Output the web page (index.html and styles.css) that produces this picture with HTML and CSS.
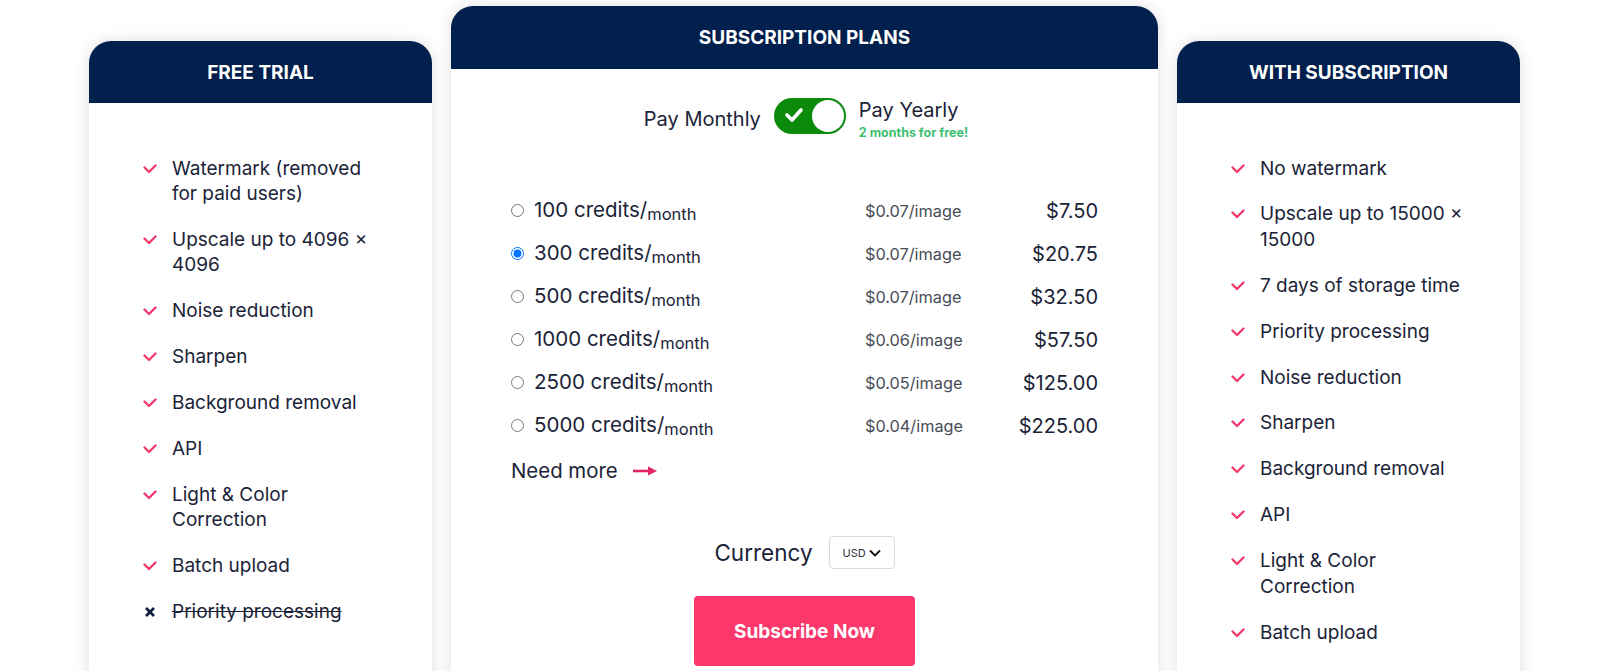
FILE: index.html
```html
<!DOCTYPE html>
<html lang="en">
<head>
<meta charset="utf-8">
<title>Pricing</title>
<link rel="stylesheet" href="styles.css">
</head>
<body>
<div class="pricing">
  <section class="card side">
    <header class="card-head">FREE TRIAL</header>
    <ul class="features">
      <li><svg class="ico" viewBox="0 0 14 10"><polyline points="1.5,3.5 6,8 12.5,1.5"/></svg><span>Watermark (removed for paid users)</span></li>
      <li><svg class="ico" viewBox="0 0 14 10"><polyline points="1.5,3.5 6,8 12.5,1.5"/></svg><span>Upscale up to 4096 × 4096</span></li>
      <li><svg class="ico" viewBox="0 0 14 10"><polyline points="1.5,3.5 6,8 12.5,1.5"/></svg><span>Noise reduction</span></li>
      <li><svg class="ico" viewBox="0 0 14 10"><polyline points="1.5,3.5 6,8 12.5,1.5"/></svg><span>Sharpen</span></li>
      <li><svg class="ico" viewBox="0 0 14 10"><polyline points="1.5,3.5 6,8 12.5,1.5"/></svg><span>Background removal</span></li>
      <li><svg class="ico" viewBox="0 0 14 10"><polyline points="1.5,3.5 6,8 12.5,1.5"/></svg><span>API</span></li>
      <li><svg class="ico" viewBox="0 0 14 10"><polyline points="1.5,3.5 6,8 12.5,1.5"/></svg><span>Light &amp; Color Correction</span></li>
      <li><svg class="ico" viewBox="0 0 14 10"><polyline points="1.5,3.5 6,8 12.5,1.5"/></svg><span>Batch upload</span></li>
      <li class="off"><svg class="ico x" viewBox="0 0 14 10"><path d="M3,1 L11,9 M11,1 L3,9"/></svg><span>Priority processing</span></li>
    </ul>
  </section>

  <section class="card main">
    <header class="card-head">SUBSCRIPTION PLANS</header>
    <div class="main-body">
      <div class="billing">
        <span class="bill-label monthly">Pay Monthly</span>
        <span class="toggle">
          <svg class="toggle-check" viewBox="0 0 20 16"><polyline points="3,8 8,13 17,3"/></svg>
          <span class="knob"></span>
        </span>
        <span class="yearly">
          <span class="bill-label">Pay Yearly</span>
          <span class="free">2 months for free!</span>
        </span>
      </div>

      <div class="plans">
        <label class="plan"><span class="plan-name"><input type="radio" name="plan"><span class="credits">100 credits/<small>month</small></span></span><span class="per">$0.07/image</span><span class="price">$7.50</span></label>
        <label class="plan"><span class="plan-name"><input type="radio" name="plan" checked><span class="credits">300 credits/<small>month</small></span></span><span class="per">$0.07/image</span><span class="price">$20.75</span></label>
        <label class="plan"><span class="plan-name"><input type="radio" name="plan"><span class="credits">500 credits/<small>month</small></span></span><span class="per">$0.07/image</span><span class="price">$32.50</span></label>
        <label class="plan"><span class="plan-name"><input type="radio" name="plan"><span class="credits">1000 credits/<small>month</small></span></span><span class="per">$0.06/image</span><span class="price">$57.50</span></label>
        <label class="plan"><span class="plan-name"><input type="radio" name="plan"><span class="credits">2500 credits/<small>month</small></span></span><span class="per">$0.05/image</span><span class="price">$125.00</span></label>
        <label class="plan"><span class="plan-name"><input type="radio" name="plan"><span class="credits">5000 credits/<small>month</small></span></span><span class="per">$0.04/image</span><span class="price">$225.00</span></label>
      </div>

      <a class="need-more">Need more <svg class="arrow" viewBox="0 0 24 12"><path d="M0,6 H17" /><polygon points="15,1.5 24,6 15,10.5"/></svg></a>

      <div class="currency">
        <span class="currency-label">Currency</span>
        <span class="select">USD<svg viewBox="0 0 12 8"><polyline points="1,1.5 6,6.5 11,1.5"/></svg></span>
      </div>

      <button class="subscribe">Subscribe Now</button>
    </div>
  </section>

  <section class="card side">
    <header class="card-head">WITH SUBSCRIPTION</header>
    <ul class="features">
      <li><svg class="ico" viewBox="0 0 14 10"><polyline points="1.5,3.5 6,8 12.5,1.5"/></svg><span>No watermark</span></li>
      <li><svg class="ico" viewBox="0 0 14 10"><polyline points="1.5,3.5 6,8 12.5,1.5"/></svg><span>Upscale up to 15000 × 15000</span></li>
      <li><svg class="ico" viewBox="0 0 14 10"><polyline points="1.5,3.5 6,8 12.5,1.5"/></svg><span>7 days of storage time</span></li>
      <li><svg class="ico" viewBox="0 0 14 10"><polyline points="1.5,3.5 6,8 12.5,1.5"/></svg><span>Priority processing</span></li>
      <li><svg class="ico" viewBox="0 0 14 10"><polyline points="1.5,3.5 6,8 12.5,1.5"/></svg><span>Noise reduction</span></li>
      <li><svg class="ico" viewBox="0 0 14 10"><polyline points="1.5,3.5 6,8 12.5,1.5"/></svg><span>Sharpen</span></li>
      <li><svg class="ico" viewBox="0 0 14 10"><polyline points="1.5,3.5 6,8 12.5,1.5"/></svg><span>Background removal</span></li>
      <li><svg class="ico" viewBox="0 0 14 10"><polyline points="1.5,3.5 6,8 12.5,1.5"/></svg><span>API</span></li>
      <li><svg class="ico" viewBox="0 0 14 10"><polyline points="1.5,3.5 6,8 12.5,1.5"/></svg><span>Light &amp; Color Correction</span></li>
      <li><svg class="ico" viewBox="0 0 14 10"><polyline points="1.5,3.5 6,8 12.5,1.5"/></svg><span>Batch upload</span></li>
    </ul>
  </section>
</div>
</body>
</html>
```

FILE: styles.css
```css
html, body {
  margin: 0;
  padding: 0;
  height: 671px;
  overflow: hidden;
  background: #ffffff;
  font-family: Inter, "Noto Sans", sans-serif;
  color: #1b2338;
}

.pricing {
  display: flex;
  align-items: flex-start;
  gap: 19px;
  padding: 6px 0 0 89px;
}

.card {
  background: #fff;
  border-radius: 22px 22px 0 0;
  box-shadow: 0 0 15px rgba(0, 0, 0, 0.13);
  overflow: hidden;
  min-height: 760px;
}

.side {
  width: 343px;
  margin-top: 35px;
}

.main {
  width: 707px;
}

.card-head {
  background: #01204d;
  color: #fff;
  font-weight: 700;
  font-size: 19px;
  height: 62px;
  display: flex;
  align-items: center;
  justify-content: center;
}

.main .card-head {
  height: 63px;
}

/* features */
.features {
  list-style: none;
  margin: 0;
  padding: 52.5px 0 0 54px;
  display: flex;
  flex-direction: column;
  gap: 20.4px;
}

.features li {
  display: flex;
  align-items: flex-start;
  font-size: 19px;
  line-height: 25.5px;
}

.features li span {
  width: 206px;
}

.ico {
  width: 14px;
  height: 10px;
  flex: none;
  margin: 8px 15px 0 0;
  fill: none;
  stroke: #f0386b;
  stroke-width: 2.3;
  stroke-linecap: round;
  stroke-linejoin: round;
}

.ico.x {
  stroke: #0e1a3e;
  stroke-width: 2.6;
  stroke-linecap: butt;
}

.off span {
  text-decoration: line-through;
}

/* main body */
.main-body {
  display: flex;
  flex-direction: column;
  align-items: center;
  padding: 29px 60px 0;
}

.billing {
  display: flex;
  align-items: flex-start;
  gap: 13px;
  margin-left: 3px;
}

.bill-label {
  font-size: 20px;
  line-height: 24px;
  display: block;
}

.monthly {
  margin-top: 9px;
}

.toggle {
  position: relative;
  width: 72px;
  height: 36px;
  border-radius: 18px;
  background: #0b8a0b;
  display: block;
  flex: none;
}

.toggle-check {
  position: absolute;
  left: 10px;
  top: 9px;
  width: 20px;
  height: 16px;
  fill: none;
  stroke: #fff;
  stroke-width: 3.6;
  stroke-linecap: round;
  stroke-linejoin: round;
}

.knob {
  position: absolute;
  right: 2px;
  top: 2px;
  width: 32px;
  height: 32px;
  border-radius: 50%;
  background: #fff;
}

.yearly {
  display: flex;
  flex-direction: column;
}

.free {
  margin-top: 3px;
  font-size: 12.5px;
  line-height: 16px;
  font-weight: 700;
  color: #3fbf72;
}

.plans {
  align-self: stretch;
  margin-top: 48px;
  display: flex;
  flex-direction: column;
}

.plan {
  display: grid;
  grid-template-columns: 354px 100px 1fr;
  align-items: center;
  height: 43px;
}

.plan-name {
  display: flex;
  align-items: center;
  gap: 10px;
}

.plan-name input {
  margin: 0;
  width: 13px;
  height: 13px;
  flex: none;
}

.credits {
  font-size: 20.5px;
  line-height: 26px;
}

.credits small {
  font-size: 16.5px;
  position: relative;
  top: 3px;
}

.per {
  font-size: 16.3px;
  color: #474c58;
}

.price {
  font-size: 20px;
  text-align: right;
}

.need-more {
  align-self: flex-start;
  margin-top: 11px;
  font-size: 20.4px;
  line-height: 26px;
  display: flex;
  align-items: center;
  gap: 15px;
}

.arrow {
  width: 24px;
  height: 12px;
  fill: #e0245e;
  stroke: #e0245e;
  stroke-width: 2.6;
}

.arrow polygon {
  stroke: none;
}

.currency {
  margin-top: 52px;
  display: flex;
  align-items: center;
  gap: 16px;
}

.currency-label {
  font-size: 22.5px;
}

.select {
  width: 66px;
  height: 33px;
  box-sizing: border-box;
  border: 1px solid #d9d9de;
  border-radius: 4px;
  display: flex;
  align-items: center;
  justify-content: center;
  gap: 3px;
  font-size: 11px;
  color: #333;
}

.select svg {
  width: 12px;
  height: 8px;
  fill: none;
  stroke: #111;
  stroke-width: 1.8;
}

.subscribe {
  margin-top: 27px;
  width: 221px;
  height: 70px;
  border: none;
  border-radius: 4px;
  background: #fb376c;
  color: #fff;
  font-family: Inter, "Noto Sans", sans-serif;
  font-weight: 700;
  font-size: 19px;
}
```
